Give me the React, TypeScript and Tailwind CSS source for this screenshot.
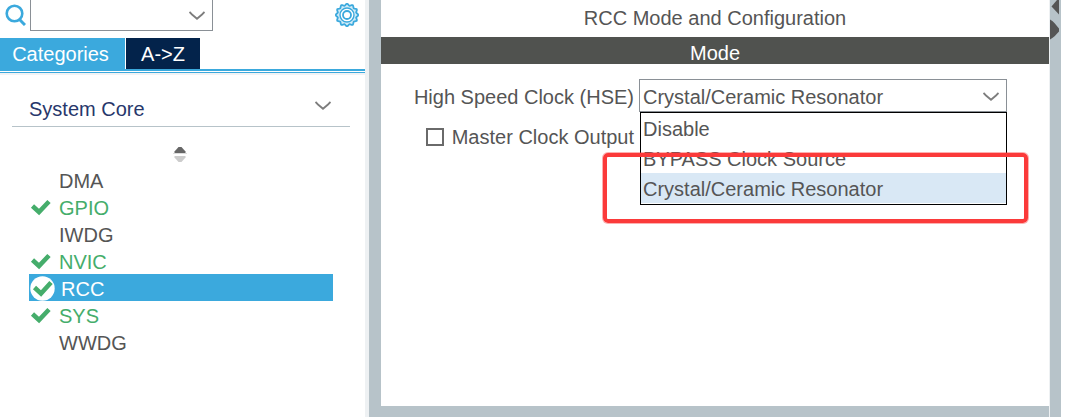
import * as React from "react"
import { useState } from "react"

type Peripheral = {
	name: string
	configured?: boolean
}

const peripherals: Peripheral[] = [
	{ name: "DMA" },
	{ name: "GPIO", configured: true },
	{ name: "IWDG" },
	{ name: "NVIC", configured: true },
	{ name: "RCC", configured: true },
	{ name: "SYS", configured: true },
	{ name: "WWDG" },
]

const hseModes = ["Disable", "BYPASS Clock Source", "Crystal/Ceramic Resonator"]

const Chevron = ({ className }: { className?: string }) => (
	<svg
		className={className}
		width="16"
		height="10"
		viewBox="0 0 16 10"
		fill="none"
		stroke="#7d7d7d"
		strokeWidth="1.8"
	>
		<path d="M0.5 1 L3 3.5 L8 7.8 L13 3.5 L15.5 1" />
	</svg>
)

const SearchIcon = () => (
	<svg width="22" height="22" viewBox="0 0 22 22" fill="none" stroke="#3ba9dd">
		<ellipse cx="10.5" cy="9.5" rx="7.8" ry="7.8" strokeWidth="2.6" />
		<path d="M15.5 15.5 L21 21" strokeWidth="3" />
	</svg>
)

// twelve rounded teeth around the rim
const gearRim = Array.from({ length: 72 }, (_, i) => {
	const a = (i / 72) * Math.PI * 2
	const r = 10.4 + 0.9 * Math.cos(a * 12)
	return `${(12 + r * Math.cos(a)).toFixed(2)},${(12 + r * Math.sin(a)).toFixed(2)}`
}).join(" ")

const GearIcon = () => (
	<svg width="24" height="24" viewBox="0 0 24 24" fill="none" stroke="#3ba9dd">
		<polygon points={gearRim} fill="#d3ecf8" strokeWidth="1.8" />
		<circle cx="12" cy="12" r="7" fill="#fff" strokeWidth="1.4" />
		<circle cx="12" cy="12" r="4" strokeWidth="1.8" />
	</svg>
)

const CheckIcon = ({ selected }: { selected?: boolean }) => (
	<svg width="26" height="26" viewBox="0 0 26 26" fill="none">
		{selected && <circle cx="13.5" cy="13.5" r="12.2" fill="#fff" />}
		<path
			d={selected ? "M5.5 12.5 L12 18.5 L22 7.5" : "M3.5 12 L10 18 L20 7.5"}
			stroke="#45ad6b"
			strokeWidth="4.6"
		/>
	</svg>
)

const Sidebar = () => {
	const [selected, setSelected] = useState("RCC")

	return (
		<aside className="flex w-[369px] shrink-0 flex-col border-r-4 border-[#eef1f3]">
			<div className="flex h-[38px] items-start pl-1">
				<button className="mt-1 w-[26px]" aria-label="Search">
					<SearchIcon />
				</button>
				<div className="relative">
					<select
						aria-label="Search peripherals"
						className="block h-[31px] w-[183px] appearance-none border border-t-0 border-[#8a9096] bg-white"
					/>
					<Chevron className="pointer-events-none absolute right-2 top-[11px]" />
				</div>
				<button className="ml-auto mr-1.5 mt-[3px]" aria-label="Settings">
					<GearIcon />
				</button>
			</div>
			<div role="tablist" className="flex h-[31px] gap-px text-white">
				<button role="tab" aria-selected="true" className="w-[125px] bg-[#3ba9dd] pr-1">
					Categories
				</button>
				<button role="tab" aria-selected="false" className="w-[74px] bg-[#03234b]">
					{"A->Z"}
				</button>
			</div>
			<div className="h-1 border-b border-t-2 border-[#3ba9dd]" />
			<div className="h-0.5 bg-[#f2f3f5]" />
			<button className="ml-3 mr-[15px] mt-[15px] flex h-[37px] items-start justify-between border-b border-[#b7c3c9] pl-[17px] pr-[19px] pt-[7px] text-[#27376b]">
				<span>System Core</span>
				<Chevron className="mt-1" />
			</button>
			<button className="mt-[19px] self-center pr-1.5" aria-label="Sort">
				<svg width="14" height="16" viewBox="0 0 14 16">
					<path d="M1.5 7 V5.5 L5.5 1 H8.5 L12.5 5.5 V7 Z" fill="#666" />
					<path d="M0 7.5 H14" stroke="#ddd" />
					<path d="M1.5 10 H12.5 V11.5 L8.5 16 H5.5 L1.5 11.5 Z" fill="#ccc" />
				</svg>
			</button>
			<ul className="ml-[29px] mr-8 mt-1">
				{peripherals.map(({ name, configured }) => {
					const active = name === selected
					return (
						<li key={name}>
							<button
								onClick={() => setSelected(name)}
								className={`flex h-[27px] w-full items-center text-left ${
									active
										? "gap-1.5 bg-[#3ba9dd] text-white"
										: configured
											? "gap-1 text-[#45ad6b]"
											: "gap-1"
								}`}
							>
								<span className="w-[26px]">
									{configured && <CheckIcon selected={active} />}
								</span>
								<span className="pt-0.5">{name}</span>
							</button>
						</li>
					)
				})}
			</ul>
		</aside>
	)
}

const ModePanel = () => {
	const [hse, setHse] = useState(hseModes[2])

	return (
		<main className="flex-1 border-b-[11px] border-l-12 border-[#b7c3c9]">
			<h1 className="h-[37px] pt-1 text-center leading-7">
				RCC Mode and Configuration
			</h1>
			<h2 className="h-[27px] bg-[#50524f] pt-0.5 text-center leading-7 text-white">
				Mode
			</h2>
			<div className="mr-[42px] mt-[15px] flex gap-[5px]">
				<div className="w-[253px] shrink-0 text-right">
					<label htmlFor="hse" className="block h-[33px] pt-1 leading-7">
						High Speed Clock (HSE)
					</label>
					<label className="mt-[11px] flex items-center justify-end gap-2 leading-7">
						<input
							type="checkbox"
							className="size-[18px] appearance-none border-2 border-[#6a6a6a] bg-white"
						/>
						Master Clock Output
					</label>
				</div>
				<div className="relative flex-1">
					<select
						id="hse"
						value={hse}
						onChange={(e) => setHse(e.target.value)}
						className="block h-[33px] w-full appearance-none border border-[#8a9096] bg-white px-[3px] pt-0.5"
					>
						{hseModes.map((mode) => (
							<option key={mode}>{mode}</option>
						))}
					</select>
					<Chevron className="pointer-events-none absolute right-2 top-[13px]" />
					<ul
						role="listbox"
						aria-label="High Speed Clock (HSE)"
						className="absolute left-px right-0 top-[33px] border border-black bg-white pb-px"
					>
						{hseModes.map((mode) => (
							<li
								key={mode}
								role="option"
								aria-selected={mode === hse}
								onClick={() => setHse(mode)}
								className={`h-[30px] px-0.5 pt-0.5 leading-7 ${
									mode === hse ? "bg-[#d9e8f5]" : ""
								}`}
							>
								{mode}
							</li>
						))}
					</ul>
					{/* highlight around the resonator option */}
					<div className="pointer-events-none absolute -left-[36px] -right-[21px] top-[74px] h-[70px] rounded-[5px] border-4 border-[#fb3a3a] ring-1 ring-[#fb3a3a]/40" />
				</div>
			</div>
		</main>
	)
}

const App: React.FC = () => {
	return (
		<div className="flex min-h-screen bg-white font-['Liberation_Sans',Arial,sans-serif] text-[20px] leading-6 text-[#555]">
			<Sidebar />
			<ModePanel />
			<div className="mr-1 w-3 shrink-0 border-l border-[#eef1f3] bg-[#b7c3c9]">
				<svg width="11" height="40" viewBox="0 0 11 40" fill="#555">
					<path d="M9 0 V14.5 L1.5 6.5 L7 0 Z" />
					<path d="M0 19.5 C4 21.5 6 25 9 28.5 V31.5 C6 34.5 4 37.5 0 39.5 Z" />
				</svg>
			</div>
		</div>
	)
}

export default App
